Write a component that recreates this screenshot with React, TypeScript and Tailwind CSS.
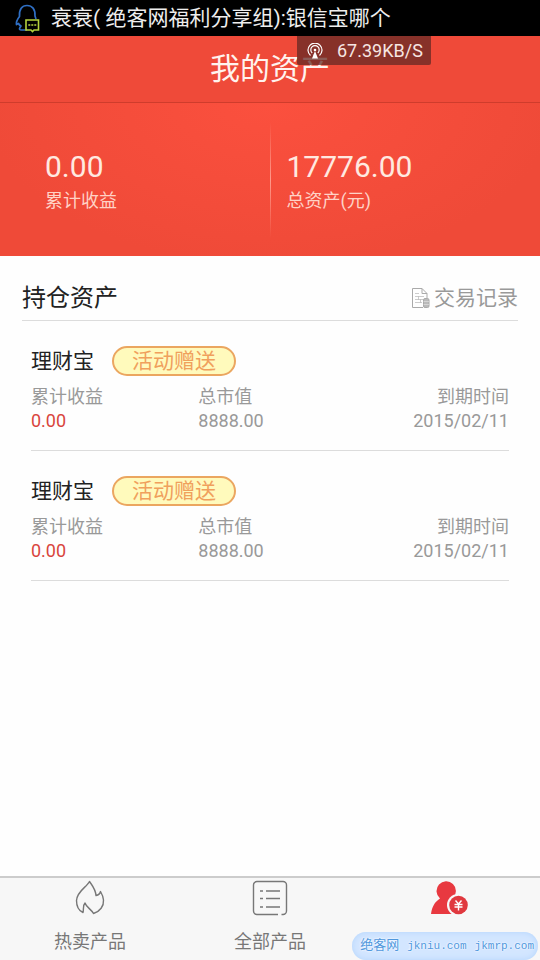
import { clsx } from 'clsx';
import type { ReactNode } from 'react';

interface Holding {
  id: number;
  name: string;
  tag: string;
  profit: string;
  marketValue: string;
  dueDate: string;
}

const holdings: Holding[] = [
  { id: 1, name: '理财宝', tag: '活动赠送', profit: '0.00', marketValue: '8888.00', dueDate: '2015/02/11' },
  { id: 2, name: '理财宝', tag: '活动赠送', profit: '0.00', marketValue: '8888.00', dueDate: '2015/02/11' },
];

// -- Icons --

const MessengerIcon = () => (
  <svg width="28" height="30" viewBox="0 0 28 30" fill="none" aria-hidden="true">
    <path
      d="M12 27H6.5c-2 0-2.5-1-1.5-2.5l1-1.5c-1.5-.5-2-1.500-2.500-2.500L1.500 21.500c-.5-3 1-5.500 3-8C4 6 7 2.500 12 2.500S20.500 6 20 13l1 3"
      stroke="#2f6fc4"
      strokeWidth="1.7"
      strokeLinejoin="round"
    />
    <path d="M11 17h12.500v10H19l-1.500 1.500L16 27h-5z" stroke="#b5d33d" strokeWidth="1.6" fill="#000" />
    <path d="M13.300 22h2M16.300 22h2M19.300 22h2" stroke="#b5d33d" strokeWidth="1.6" />
  </svg>
);

const SignalIcon = () => (
  <svg width="16" height="16" viewBox="0 0 16 16" fill="none" stroke="#fff" strokeWidth="1.2" aria-hidden="true">
    <path d="M3.500 12.500a7 7 0 1 1 9 0" />
    <path d="M5.200 10a4.200 4.200 0 1 1 5.600 0" />
    <path d="M8 8 5 15.500h6z" fill="#fff" stroke="none" />
    <circle cx="8" cy="7" r="1.3" fill="#fff" stroke="none" />
  </svg>
);

const RecordIcon = () => (
  <svg width="19" height="22" viewBox="0 0 19 22" fill="none" stroke="#aaa" aria-hidden="true">
    <path d="M12 20.500H1.500v-19H11l5 5V12M11 1.500v5h5" />
    <path d="M4 6.500h4M4 9.500h9M4 12.500h8M4 15.500h7M7.500 9.500v3M9.500 12.500v3" strokeWidth=".6" />
    <rect x="12.500" y="11.500" width="5.500" height="9" rx="1.500" fill="#bbb" />
    <path d="M12.500 14.500H18M12.500 17.500H18" stroke="#eee" strokeWidth=".5" />
  </svg>
);

const FlameIcon = () => (
  <svg width="36" height="36" viewBox="0 0 36 36" fill="none" stroke="#777" strokeWidth="1.4" aria-hidden="true">
    <path
      d="M17.500 1.500C15 7 5 11 4.500 20.500c0 6 3 10.500 6.500 12 1-3.500-.5-7 2-9.500 1.500 4.500 6 6 8.500 10.500C28 31.500 32 26 31.500 20c-.5-4-1.500-6-3-8.500-.5 2.500-2 3.500-4.500 4C23.500 9 20.500 6 17.500 1.500z"
      strokeLinejoin="round"
    />
  </svg>
);

const ListIcon = () => (
  <svg width="36" height="36" viewBox="0 0 36 36" fill="none" stroke="#777" strokeWidth="1.4" aria-hidden="true">
    <path d="M26 34.500H5a3.500 3.500 0 0 1-3.500-3.500V5A3.500 3.500 0 0 1 5 1.500h26A3.500 3.500 0 0 1 34.500 5v26a3.500 3.500 0 0 1-3.500 3.500h-1.500" />
    <path d="M8 11h3M14 11h14M8 18.500h3M14 18.500h14M8 27h3M14 27h14" />
  </svg>
);

const AssetIcon = () => (
  <svg width="38" height="36" viewBox="0 0 38 36" aria-hidden="true">
    <path d="M0 34C1 27 3.500 22 9 18.500A9.700 9.700 0 1 1 22 18C26 22 28 27 29 34z" fill="#e83940" />
    <circle cx="27" cy="25" r="11" fill="#f8f8f8" />
    <circle cx="27.500" cy="25" r="9.3" fill="#e0393f" />
    <path d="M24.500 20.500l3 3.500 3-3.500M23.500 24.500h8M23.500 27h8M27.500 24v6.500" fill="none" stroke="#fff" strokeWidth="1.4" />
  </svg>
);

// -- Page parts --

const Summary = ({ value, label }: { value: string; label: string }) => (
  <div className="flex flex-col pt-0.5 text-[#ffe9e0]">
    <span className="text-3xl leading-10">{value}</span>
    <span className="text-lg leading-7 text-[#ffd2c6]">{label}</span>
  </div>
);

const Field = ({ label, value, className }: { label: string; value: string; className?: string }) => (
  <div className={clsx('text-lg', className)}>
    <dt className="leading-[26px]">{label}</dt>
    <dd className="leading-[22px]">{value}</dd>
  </div>
);

const HoldingItem = ({ item }: { item: Holding }) => (
  <li className="border-b border-[#dcdcdc] pt-[25px] pb-[18px]">
    <div className="flex items-center">
      <h3 className="text-[21px] leading-[30px] text-[#222]">{item.name}</h3>
      <span className="ml-[18px] flex h-[30px] items-center rounded-full border-2 border-[#eba660] bg-[#fffabc] px-[18px] text-[21px] leading-6 text-[#f0a05c]">
        {item.tag}
      </span>
    </div>
    <dl className="mt-2 grid grid-cols-[35%_1fr_auto] text-[#999]">
      <Field label="累计收益" value={item.profit} className="[&>dd]:text-[#d9453d]" />
      <Field label="总市值" value={item.marketValue} />
      <Field label="到期时间" value={item.dueDate} className="text-right" />
    </dl>
  </li>
);

const Tab = ({ icon, label, active }: { icon: ReactNode; label: string; active?: boolean }) => (
  <a
    href="#"
    aria-current={active ? 'page' : undefined}
    className={clsx('flex flex-1 flex-col items-center pt-0.5', active ? 'text-[#e83940]' : 'text-[#777]')}
  >
    {icon}
    <span className="mt-3.5 text-lg leading-6">{label}</span>
  </a>
);

export default function App() {
  return (
    <div className="relative flex min-h-screen flex-col bg-[#fefefe] font-[Roboto,'Noto_Sans_CJK_SC',sans-serif]">
      <div className="flex h-9 items-center gap-2 bg-black pl-[15px] text-[21px] text-[#eee]">
        <MessengerIcon />
        <span className="pt-0.5 whitespace-nowrap">衰衰( 绝客网福利分享组):银信宝哪个</span>
      </div>

      <header className="flex h-[67px] items-center justify-center border-b border-[#cf3c2c] bg-[#ef4a39]">
        <h1 className="text-3xl text-[#fff3ee]">我的资产</h1>
      </header>

      <section className="grid h-[153px] grid-cols-[1fr_1px_1fr] items-center bg-[radial-gradient(ellipse_at_top,#fb503e,#ef4a38_75%)]">
        <div className="pl-[45px]">
          <Summary value="0.00" label="累计收益" />
        </div>
        <div className="h-[116px] bg-linear-to-b from-transparent via-[#ff9a8c] to-transparent" />
        <div className="pl-4">
          <Summary value="17776.00" label="总资产(元)" />
        </div>
      </section>

      <main className="flex-1 px-[22px]">
        <div className="flex items-center justify-between border-b border-[#dcdcdc] pt-[26px] pb-1.5">
          <h2 className="text-2xl text-[#222]">持仓资产</h2>
          <a href="#" className="flex items-center gap-1 text-[21px] leading-8 text-[#999]">
            <RecordIcon />
            交易记录
          </a>
        </div>
        <ul className="px-[9px]">
          {holdings.map((item) => (
            <HoldingItem key={item.id} item={item} />
          ))}
        </ul>
      </main>

      <nav className="flex h-[84px] border-t-2 border-[#cccccc] bg-[#f7f7f7]">
        <Tab icon={<FlameIcon />} label="热卖产品" />
        <Tab icon={<ListIcon />} label="全部产品" />
        <Tab icon={<AssetIcon />} label="我的理财" active />
      </nav>

      {/* Network speed overlay */}
      <div className="absolute top-9 left-[297px] flex h-[29px] w-[134px] items-center rounded-b-xs bg-[#642a24]/75 pl-[10px] text-lg text-[#f6e6e2]">
        <SignalIcon />
        <span className="ml-[14px]">67.39KB/S</span>
      </div>

      {/* Site watermark */}
      <div className="absolute right-0.5 bottom-0 flex h-7 items-center gap-2 rounded-full bg-[#d3e6ff] pr-1 pl-2 font-['Liberation_Mono','Noto_Sans_CJK_SC',monospace] text-[11px] text-[#4f97dd] shadow-[inset_0_0_6px_#b4d5fc] text-shadow-[0_0_2px_#fff,0_0_2px_#fff]">
        <span className="text-[13px]">绝客网</span>
        <span>jkniu.com</span>
        <span>jkmrp.com</span>
      </div>
    </div>
  );
}
